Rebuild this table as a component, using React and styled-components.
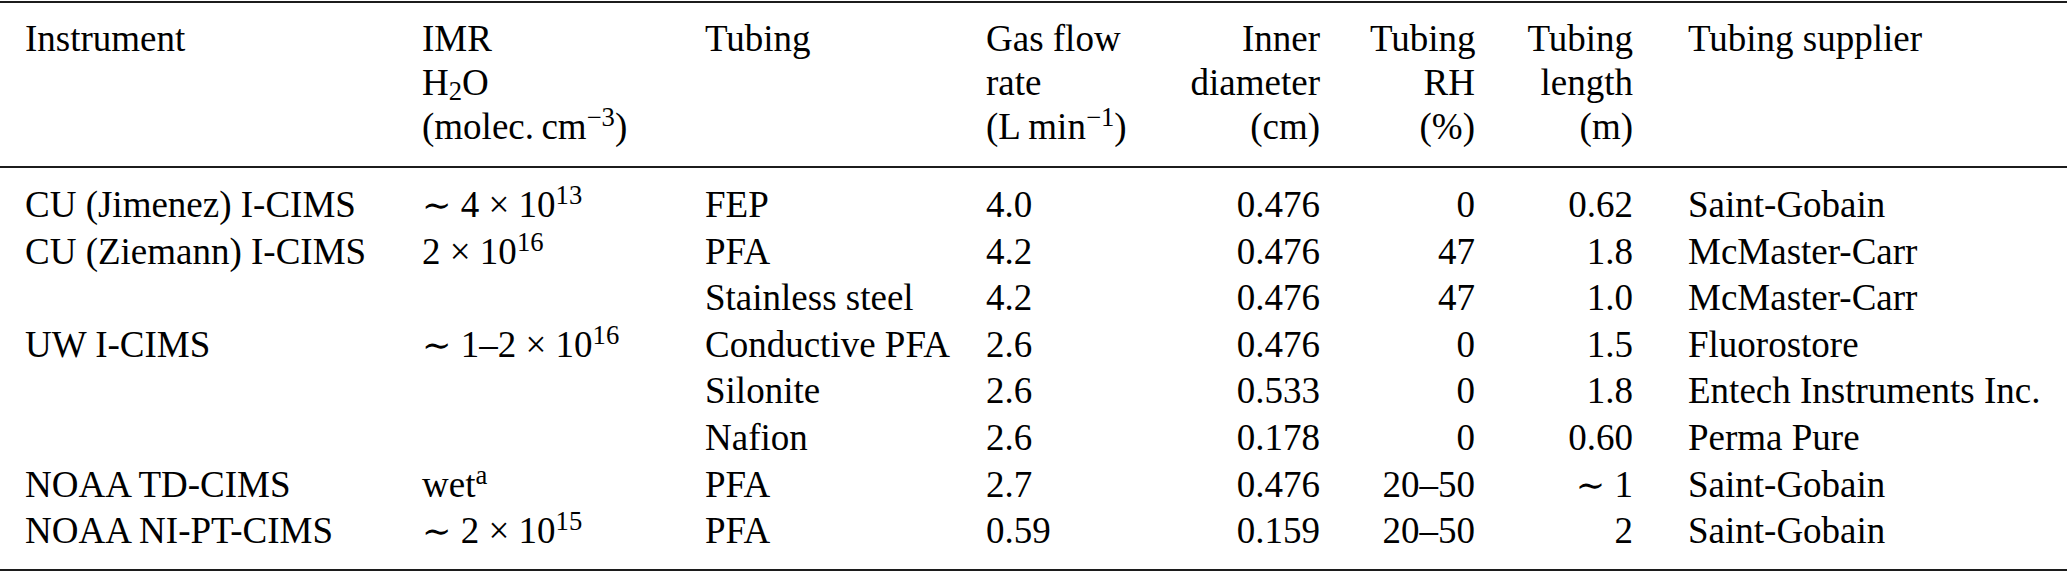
import React from "react";
import styled, { createGlobalStyle, css } from "styled-components";

const GlobalStyle = createGlobalStyle`
  html, body {
    margin: 0;
    padding: 0;
    background: #ffffff;
  }
  body {
    font-family: "Liberation Serif", serif;
    color: #000;
  }
`;

const columns = css`
  display: grid;
  grid-template-columns: 397px 283px 281px 204px 180px 155px 158px 1fr;
`;

const Table = styled.div`
  width: 2067px;
  margin-top: 1px;
  border-top: 2px solid #1c1c1c;
  border-bottom: 2px solid #1c1c1c;
  font-family: "Liberation Serif", serif;
  font-size: 37px;
  color: #000;
`;

const Head = styled.div`
  ${columns};
  padding: 14px 0 17px;
  border-bottom: 2px solid #1c1c1c;
  line-height: 44px;
`;

const Body = styled.div`
  ${columns};
  padding: 14px 0 14px;
  line-height: 46.6px;
`;

const Cell = styled.div`
  white-space: nowrap;
  text-align: ${(p) => (p.$right ? "right" : "left")};
  padding: 0 25px 0 ${(p) => (p.$last ? "30px" : "25px")};
`;

const Line = styled.div``;

const Sup = styled.span`
  font-size: 0.72em;
  vertical-align: 0.48em;
  line-height: 0;
`;

const Sub = styled.span`
  font-size: 0.72em;
  vertical-align: -0.2em;
  line-height: 0;
`;

const Op = styled.span`
  font-family: "DejaVu Serif", serif;
  font-size: 0.95em;
`;

const Tilde = () => <Op>∼</Op>;

const rows = [
  ["CU (Jimenez) I-CIMS", <><Tilde /> 4 × 10<Sup>13</Sup></>, "FEP", "4.0", "0.476", "0", "0.62", "Saint-Gobain"],
  ["CU (Ziemann) I-CIMS", <>2 × 10<Sup>16</Sup></>, "PFA", "4.2", "0.476", "47", "1.8", "McMaster-Carr"],
  ["", "", "Stainless steel", "4.2", "0.476", "47", "1.0", "McMaster-Carr"],
  ["UW I-CIMS", <><Tilde /> 1–2 × 10<Sup>16</Sup></>, "Conductive PFA", "2.6", "0.476", "0", "1.5", "Fluorostore"],
  ["", "", "Silonite", "2.6", "0.533", "0", "1.8", "Entech Instruments Inc."],
  ["", "", "Nafion", "2.6", "0.178", "0", "0.60", "Perma Pure"],
  ["NOAA TD-CIMS", <>wet<Sup>a</Sup></>, "PFA", "2.7", "0.476", "20–50", <><Tilde /> 1</>, "Saint-Gobain"],
  ["NOAA NI-PT-CIMS", <><Tilde /> 2 × 10<Sup>15</Sup></>, "PFA", "0.59", "0.159", "20–50", "2", "Saint-Gobain"],
];

const rightCols = [4, 5, 6];

export default function App() {
  return (
    <>
      <GlobalStyle />
      <Table>
        <Head>
          <Cell>
            <Line>Instrument</Line>
          </Cell>
          <Cell>
            <Line>IMR</Line>
            <Line>
              H<Sub>2</Sub>O
            </Line>
            <Line>
              (molec.&#8201;cm<Sup>−3</Sup>)
            </Line>
          </Cell>
          <Cell>
            <Line>Tubing</Line>
          </Cell>
          <Cell>
            <Line>Gas flow</Line>
            <Line>rate</Line>
            <Line>
              (L&#8201;min<Sup>−1</Sup>)
            </Line>
          </Cell>
          <Cell $right>
            <Line>Inner</Line>
            <Line>diameter</Line>
            <Line>(cm)</Line>
          </Cell>
          <Cell $right>
            <Line>Tubing</Line>
            <Line>RH</Line>
            <Line>(%)</Line>
          </Cell>
          <Cell $right>
            <Line>Tubing</Line>
            <Line>length</Line>
            <Line>(m)</Line>
          </Cell>
          <Cell $last>
            <Line>Tubing supplier</Line>
          </Cell>
        </Head>
        <Body>
          {rows.map((row, i) =>
            row.map((val, j) => (
              <Cell key={i + "-" + j} $right={rightCols.includes(j)} $last={j === 7}>
                {val === "" ? "\u00a0" : val}
              </Cell>
            ))
          )}
        </Body>
      </Table>
    </>
  );
}
